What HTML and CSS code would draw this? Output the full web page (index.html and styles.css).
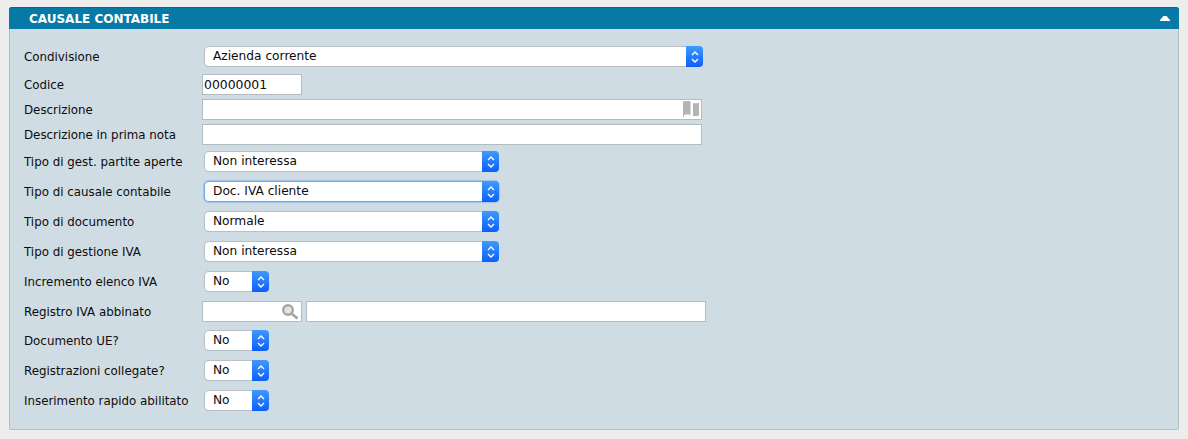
FILE: index.html
```html
<!DOCTYPE html>
<html lang="it">
<head>
  <meta charset="UTF-8">
  <meta name="viewport" content="width=device-width, initial-scale=1.0">
  <title>Causale contabile</title>
  <link rel="stylesheet" href="styles.css">
</head>
<body>
  <section class="panel">
    <header class="panel-header">
      <h1>CAUSALE CONTABILE</h1>
      <svg class="collapse" width="10" height="5" viewBox="0 0 10 5"><path d="M3.5 0h3L10 4v1H0V4z" fill="#fff"/></svg>
    </header>

    <div class="panel-body">
      <div class="row row-select">
        <span class="label">Condivisione</span>
        <div class="select select-full">
          <span class="select-text">Azienda corrente</span>
          <span class="select-btn"><svg width="10" height="14" viewBox="0 0 10 14"><path d="M2 5l3-3 3 3M2 9l3 3 3-3" fill="none" stroke="#fff" stroke-width="1.4"/></svg></span>
        </div>
      </div>

      <div class="row row-input">
        <span class="label">Codice</span>
        <div class="input input-short">00000001</div>
      </div>

      <div class="row row-input">
        <span class="label">Descrizione</span>
        <div class="input input-long">
          <svg class="flag" width="16" height="16" viewBox="0 0 16 16"><path d="M0 0h1v16H0z M1 .5c2-.6 4-.6 6.500 0v13.500c-2.500-.6-4.500-.6-6.500 0z M10 2c2 .5 4 .4 6-.2v12.700c-2 .6-4 .7-6 .5z" fill="#b4b4b4"/></svg>
        </div>
      </div>

      <div class="row row-input">
        <span class="label">Descrizione in prima nota</span>
        <div class="input input-long"></div>
      </div>

      <div class="row row-select">
        <span class="label">Tipo di gest. partite aperte</span>
        <div class="select select-mid">
          <span class="select-text">Non interessa</span>
          <span class="select-btn"><svg width="10" height="14" viewBox="0 0 10 14"><path d="M2 5l3-3 3 3M2 9l3 3 3-3" fill="none" stroke="#fff" stroke-width="1.4"/></svg></span>
        </div>
      </div>

      <div class="row row-select">
        <span class="label">Tipo di causale contabile</span>
        <div class="select select-mid select-focus">
          <span class="select-text">Doc. IVA cliente</span>
          <span class="select-btn"><svg width="10" height="14" viewBox="0 0 10 14"><path d="M2 5l3-3 3 3M2 9l3 3 3-3" fill="none" stroke="#fff" stroke-width="1.4"/></svg></span>
        </div>
      </div>

      <div class="row row-select">
        <span class="label">Tipo di documento</span>
        <div class="select select-mid">
          <span class="select-text">Normale</span>
          <span class="select-btn"><svg width="10" height="14" viewBox="0 0 10 14"><path d="M2 5l3-3 3 3M2 9l3 3 3-3" fill="none" stroke="#fff" stroke-width="1.4"/></svg></span>
        </div>
      </div>

      <div class="row row-select">
        <span class="label">Tipo di gestione IVA</span>
        <div class="select select-mid">
          <span class="select-text">Non interessa</span>
          <span class="select-btn"><svg width="10" height="14" viewBox="0 0 10 14"><path d="M2 5l3-3 3 3M2 9l3 3 3-3" fill="none" stroke="#fff" stroke-width="1.4"/></svg></span>
        </div>
      </div>

      <div class="row row-select">
        <span class="label">Incremento elenco IVA</span>
        <div class="select select-small">
          <span class="select-text">No</span>
          <span class="select-btn"><svg width="10" height="14" viewBox="0 0 10 14"><path d="M2 5l3-3 3 3M2 9l3 3 3-3" fill="none" stroke="#fff" stroke-width="1.4"/></svg></span>
        </div>
      </div>

      <div class="row row-lookup">
        <span class="label">Registro IVA abbinato</span>
        <div class="input input-short">
          <svg class="lens" width="18" height="17" viewBox="0 0 18 17"><circle cx="6" cy="7" r="4.800" fill="#e4e4e4" stroke="#a6a6a6" stroke-width="2.400"/><path d="M9.500 10.500l6 5" stroke="#a6a6a6" stroke-width="2.800"/></svg>
        </div>
        <div class="input input-desc"></div>
      </div>

      <div class="row row-select">
        <span class="label">Documento UE?</span>
        <div class="select select-small">
          <span class="select-text">No</span>
          <span class="select-btn"><svg width="10" height="14" viewBox="0 0 10 14"><path d="M2 5l3-3 3 3M2 9l3 3 3-3" fill="none" stroke="#fff" stroke-width="1.4"/></svg></span>
        </div>
      </div>

      <div class="row row-select">
        <span class="label">Registrazioni collegate?</span>
        <div class="select select-small">
          <span class="select-text">No</span>
          <span class="select-btn"><svg width="10" height="14" viewBox="0 0 10 14"><path d="M2 5l3-3 3 3M2 9l3 3 3-3" fill="none" stroke="#fff" stroke-width="1.4"/></svg></span>
        </div>
      </div>

      <div class="row row-select">
        <span class="label">Inserimento rapido abilitato</span>
        <div class="select select-small">
          <span class="select-text">No</span>
          <span class="select-btn"><svg width="10" height="14" viewBox="0 0 10 14"><path d="M2 5l3-3 3 3M2 9l3 3 3-3" fill="none" stroke="#fff" stroke-width="1.4"/></svg></span>
        </div>
      </div>
    </div>
  </section>
</body>
</html>
```

FILE: styles.css
```css
body {
  margin: 0;
  padding: 7px 9px 0;
  height: 439px;
  box-sizing: border-box;
  overflow: hidden;
  background-color: #ededed;
  color: #0c0c0c;
  font-family: "DejaVu Sans", sans-serif;
  font-size: 11.85px;
}

.panel {
  height: 423px;
  box-sizing: border-box;
  background-color: #d0dce3;
  border: 1px solid #b4bdc2;
  border-top: none;
  border-radius: 3px 3px 2px 2px;
}

.panel-header {
  display: flex;
  align-items: center;
  justify-content: space-between;
  height: 22px;
  margin: 0 -1px;
  padding: 0 9px 0 20px;
  background-color: #0779a6;
  border-top: 1px solid #05658b;
  box-sizing: border-box;
  border-radius: 3px 3px 0 0;
}

.panel-header h1 {
  margin: 0;
  color: #fff;
  font-size: 12px;
  font-weight: 700;
}

.panel-body {
  padding: 13px 0 0 14px;
}

.row {
  display: flex;
  box-sizing: border-box;
}

.row-select {
  height: 30px;
  padding-top: 4px;
}

.row-input {
  height: 25px;
  padding-top: 2px;
}

.row-lookup {
  height: 29px;
  padding-top: 4px;
}

.label {
  width: 178px;
  flex: none;
  line-height: 22px;
  white-space: nowrap;
}

.input {
  position: relative;
  height: 21px;
  box-sizing: border-box;
  background-color: #fff;
  border: 1px solid #b3bcc0;
  font-size: 12.4px;
  line-height: 20px;
  padding-left: 1px;
}

.input-short {
  width: 100px;
}

.input-long {
  width: 500px;
}

.input-desc {
  width: 400px;
  margin-left: 4px;
}

.flag {
  position: absolute;
  top: 1px;
  right: 2px;
}

.lens {
  position: absolute;
  top: 1px;
  right: 1px;
}

.select {
  display: flex;
  height: 19px;
  box-sizing: border-box;
  margin: 1px 0 0 3px;
  background-color: #fff;
  border-radius: 4px;
  box-shadow: 0 0 0 1px #b7c0c5, 0 1px 0 0 #a3acb0;
}

.select-full {
  width: 497px;
}

.select-mid {
  width: 293px;
}

.select-small {
  width: 63px;
}

.select-focus {
  box-shadow: 0 0 0 1px #6fa9ea, 0 0 1px 2px #9cc3ee;
}

.select-text {
  flex: 1;
  padding-left: 8px;
  font-size: 12.2px;
  line-height: 19px;
}

.select-btn {
  display: flex;
  align-items: center;
  justify-content: center;
  width: 17px;
  margin: -1px -1px -1px 0;
  background: linear-gradient(#3f9afc, #0b5ffb);
  border-radius: 0 4px 4px 0;
}
```
